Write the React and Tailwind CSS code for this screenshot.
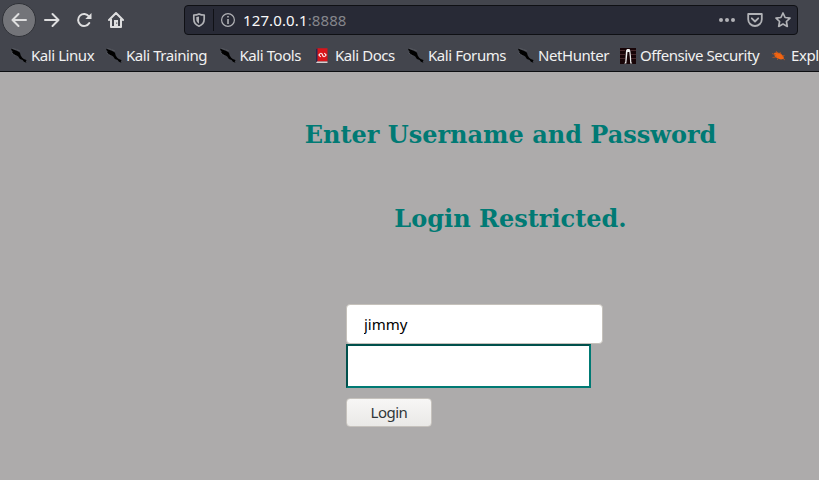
const Dragon = () => (
  <svg className="h-4 w-4 shrink-0" viewBox="0 0 16 16">
    <path d="M.3.800 2.500 1.400 5 2.600 7.200 3.500 9 4.700l.7 2.700 1.500 2.300 1.600 1.200 2.600 1 .2.700-.9.300.7 1.800-2.500-.9-1.300-1.700-2.700-1.100-1.700-2.600-1.500-1-1.800-.5L2.100 5.500 1 4l.800-.4L.3 2z" fill="#000" />
    <path d="M1.500.500 5.500 1.500M6 1.800l2.800 1M.5 4.500l1.500 1.800M3 6.800l1.500.8" fill="none" stroke="#63656b" strokeWidth=".6" />
  </svg>
);

const Book = () => (
  <svg className="-ml-px mr-px h-4 w-4 shrink-0" viewBox="0 0 16 16">
    <path d="M2 1 3 .3h10.500v13.200H2z" fill="#d8151b" />
    <path d="M2 1 3.500.3V13L2 14.500z" fill="#28264e" />
    <path d="M3 13.500h10.500V15H2z" fill="#d6cfd0" />
    <path d="M6.700 5 4.900 7l1.800 2M10.300 5l1.800 2-1.800 2M7.500 5l2 4" fill="none" stroke="#fff" strokeWidth="1.100" />
  </svg>
);

const Offsec = () => (
  <svg className="h-4 w-4 shrink-0" viewBox="0 0 16 16">
    <path d="M0 0h16v16H0z" fill="#180508" />
    <path d="M0 2.500h5M11 2.500h5M0 6.500h5M11 6.500h5M0 10.500h5M11 10.500h5" stroke="#47282c" />
    <path d="M7 1h2.500l.8 1.500.7 6 .3 5.500 1 1.500h-2.100L9.800 9 9.300 4H7.500L7 9l-.7 6.500H4.200L5.300 14l.3-5.500.4-6z" fill="#eee" />
  </svg>
);

const Bug = () => (
  <svg className="h-4 w-4 shrink-0" viewBox="0 0 16 16">
    <path d="M3 5 6 4.200l4 1.500 2.500 2.800.5 2.300-3 .8-3.500-1-2.700-2.200z" fill="#f26411" />
    <path d="m1 5.500 4 1.500M5 3l2.500 3M9 4l1 2.500M1.500 9.500 6 9M6 12l2-2M11 8l2.500-.5M12 10.500l2 1.500" stroke="#bd5620" strokeWidth=".8" />
  </svg>
);

const bookmarks = [
  { label: "Kali Linux", Icon: Dragon, cell: "w-[95px]" },
  { label: "Kali Training", Icon: Dragon, cell: "w-[113.500px]" },
  { label: "Kali Tools", Icon: Dragon, cell: "w-[95.500px]" },
  { label: "Kali Docs", Icon: Book, cell: "w-[93px]" },
  { label: "Kali Forums", Icon: Dragon, cell: "w-[110px]" },
  { label: "NetHunter", Icon: Dragon, cell: "w-[102px]" },
  { label: "Offensive Security", Icon: Offsec, cell: "w-[151px]" },
  { label: "Expl", Icon: Bug, cell: "w-[48px]" },
];

const Stroke = ({ d, className = "", width = 2 }) => (
  <svg className={`h-4 w-4 ${className}`} viewBox="0 0 16 16" fill="none" stroke="currentColor" strokeWidth={width} strokeLinecap="round" strokeLinejoin="round">
    <path d={d} />
  </svg>
);

function Toolbar() {
  return (
    <div className="flex h-10 items-center text-[#dededf]">
      <button className="ml-[2px] flex h-[34px] w-[34px] items-center justify-center rounded-full border border-[#303238] bg-[#737479]">
        <Stroke d="M15 8H1.500M7.500 2l-6 6 6 6" />
      </button>
      <Stroke className="ml-2" d="M1 8h13.500M8.500 2l6 6-6 6" />
      <svg className="ml-4 h-4 w-4" viewBox="0 0 16 16">
        <path d="M13 4.500A6 6 0 1 0 13.300 11" fill="none" stroke="currentColor" strokeWidth="2" strokeLinecap="round" />
        <path d="M15.500.9V7H9.300z" fill="currentColor" />
      </svg>
      <svg className="ml-4 h-4 w-4" viewBox="0 0 16 16">
        <path d="m1 8 7-7 7 7M3 7v8h10V7" fill="none" stroke="currentColor" strokeWidth="2" strokeLinejoin="round" strokeLinecap="round" />
        <path d="M6 8h4v6H6z" fill="currentColor" /><path d="M8.200 10.500h1v1.200h-1z" fill="#43454d" />
      </svg>
      <div className="ml-[60px] flex h-[30px] w-[614px] items-center rounded-[4px] border border-[#0f1014] bg-[#282a36] text-[#b1b2b6]">
        <svg className="ml-[6px] h-4 w-4" viewBox="0 0 16 16">
          <path d="M8 1.900c1.700.8 3.400 1.100 5.200 1.100v4.100c0 3.600-2.200 6-5.200 7.100-3-1.100-5.200-3.500-5.200-7.100V3c1.800 0 3.500-.3 5.200-1.100z" fill="none" stroke="currentColor" strokeWidth="1.700" strokeLinejoin="round" />
          <path d="M8 4.500v7.200C6.200 10.700 5.300 9.200 5.300 7V5.100C6.300 5 7.200 4.800 8 4.500z" fill="currentColor" />
        </svg>
        <div className="ml-[6px] h-[22px] w-px bg-[#101116]" />
        <svg className="ml-[6px] h-4 w-4" viewBox="0 0 16 16">
          <circle cx="8" cy="8" r="6.400" fill="none" stroke="currentColor" strokeWidth="1.200" />
          <path d="M7.200 4h1.600v1.600H7.200zM7.200 7h1.600v5H7.200z" fill="currentColor" />
        </svg>
        <span className="ml-[7px] text-[15px] leading-5 tracking-[0.12px] text-[#85868c]"><span className="text-[#f9f9fa]">127.0.0.1</span>:8888</span>
        <svg className="ml-auto h-4 w-4" viewBox="0 0 16 16" fill="currentColor">
          <circle cx="2" cy="8" r="2" /><circle cx="8" cy="8" r="2" /><circle cx="14" cy="8" r="2" />
        </svg>
        <Stroke className="ml-3" d="M1.200 2h13.600v5.200A6.800 6.800 0 0 1 1.200 7.200zM4.800 6.300 8 9.500l3.200-3.200" width={1.8} />
        <Stroke className="ml-3 mr-[6px]" d="m8 1 2.100 4.500 4.900.6-3.600 3.400.9 4.900L8 12.100l-4.300 2.300.9-4.900L1 6.100l4.900-.6z" width={1.7} />
      </div>
    </div>
  );
}

export default function App() {
  return (
    <div className="flex h-[480px] w-[819px] flex-col overflow-hidden bg-[#adabab] font-['Noto_Sans',sans-serif]">
      <header className="h-[72px] shrink-0 overflow-hidden border-b border-[#0d0e11] bg-[#43454d]">
        <Toolbar />
        <nav className="flex h-[31px] items-center pl-[11px]">
          {bookmarks.map(({ label, Icon, cell }) => (
            <a key={label} className={`flex shrink-0 items-center gap-1 whitespace-nowrap text-[15px] leading-[19px] tracking-[-0.44px] text-[#f1f1f1] ${cell}`}>
              <Icon /><span className="-mt-px">{label}</span>
            </a>
          ))}
        </nav>
      </header>
      <main>
        <div className="ml-[202px] flex w-[617px] flex-col items-center pt-[49px] font-['DejaVu_Serif',serif] text-2xl leading-7 font-bold text-[#007a74]">
          <h2>Enter Username and Password</h2>
          <h2 className="mt-14">Login Restricted.</h2>
        </div>
        <form className="mt-[71px] ml-[346px] flex flex-col items-start">
          <input className="h-10 w-[257px] rounded-[4px] border border-[#c5c1bb] bg-white px-[17px] text-[15px] text-black outline-none" defaultValue="jimmy" />
          <input type="password" className="h-11 w-[245px] border-2 border-t-[#00504c] border-r-[#007a74] border-b-[#007a74] border-l-[#00504c] bg-white outline-none" />
          <button type="button" className="mt-[10px] h-[29px] w-[86px] rounded-[4px] border border-[#c6c2bd] bg-linear-to-b from-[#f7f6f5] to-[#eae9e7] pb-[2px] text-[15px] leading-5 tracking-[-0.5px] text-[#303638]">Login</button>
        </form>
      </main>
    </div>
  );
}
